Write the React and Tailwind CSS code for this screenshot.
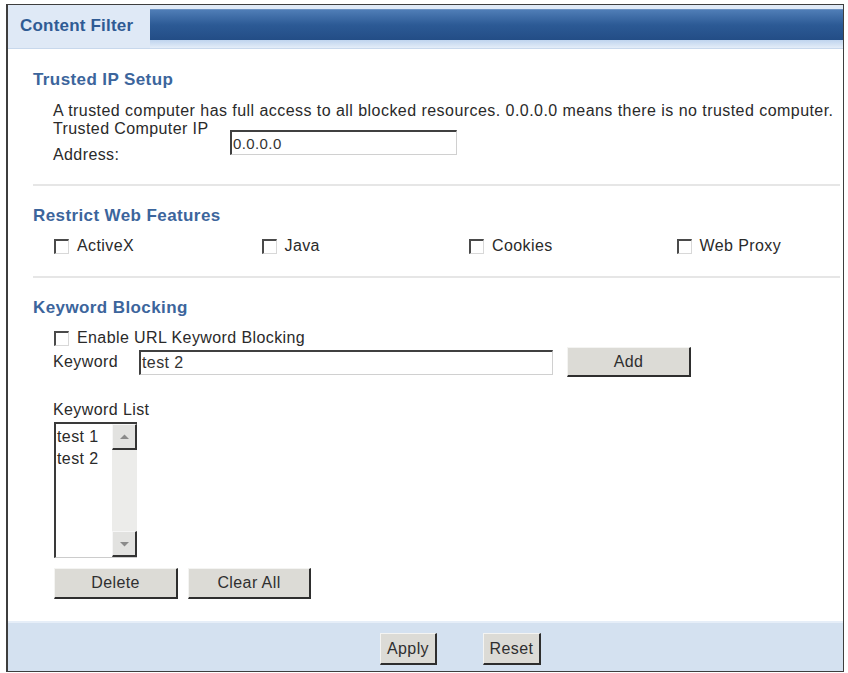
import { useState } from "react";

const FONT = { fontFamily: '"Liberation Sans", Arial, sans-serif' };

function Check({ label, checked, onChange }) {
  return (
    <label className="flex items-center cursor-pointer select-none">
      <span
        onClick={onChange}
        className="w-[15px] h-[15px] bg-white border-t-2 border-l-2 border-[#4a4a4a] border-r border-b border-r-[#d8d8d8] border-b-[#d8d8d8] flex items-center justify-center text-[10px] leading-none"
      >
        {checked ? "✓" : ""}
      </span>
      <span className="ml-[8px] text-[16px] text-[#2a2a2a]">{label}</span>
    </label>
  );
}

function Btn({ children, className = "" }) {
  return (
    <button
      className={`bg-[#dcdbd6] border-t border-l border-[#f4f4f2] border-r-2 border-b-2 border-r-[#2e2e2e] border-b-[#2e2e2e] text-[16px] text-[#2f2f2f] ${className}`}
    >
      {children}
    </button>
  );
}

function Heading({ children, className = "" }) {
  return (
    <div className={`h-[20px] flex items-center text-[17px] font-bold text-[#3c659c] tracking-[0.4px] ${className}`}>
      {children}
    </div>
  );
}

const Sep = ({ className = "" }) => (
  <div className={`ml-[25px] mr-[3px] border-t-2 border-[#e6e6e6] ${className}`} />
);

function Arrow({ up }) {
  return (
    <div className="h-[26px] bg-[#e2e2e0] border-t border-l border-[#f6f6f6] border-r-2 border-b-2 border-r-[#333] border-b-[#333] flex items-center justify-center">
      <svg width="9" height="6" viewBox="0 0 9 6">
        <path d={up ? "M0 5 L4.5 0.5 L9 5 Z" : "M0 1 L4.5 5.5 L9 1 Z"} fill="#8a8a8a" />
      </svg>
    </div>
  );
}

export default function App() {
  const [features, setFeatures] = useState({ ActiveX: false, Java: false, Cookies: false, "Web Proxy": false });
  const [enableKw, setEnableKw] = useState(false);
  const [ip, setIp] = useState("0.0.0.0");
  const [kw, setKw] = useState("test 2");
  const [list] = useState(["test 1", "test 2"]);

  return (
    <div className="w-[848px] h-[673px] bg-white pt-[4px] pl-[6px] overflow-hidden tracking-[0.4px]" style={FONT}>
      <div className="w-[838px] h-[668px] border border-l-2 border-[#3e3e3e] flex flex-col">
        {/* tab strip */}
        <div className="h-[44px] flex bg-[#dfe9f6] border-b border-[#c8d8ec]">
          <div className="w-[142px] flex items-center pl-[12px] pb-[2px] text-[17px] font-bold text-[#2f5b94] tracking-[0.2px]">
            Content Filter
          </div>
          <div className="flex-1 flex flex-col pt-[4px]">
            <div className="h-[31px] bg-gradient-to-b from-[#4f7db6] via-[#2c5a95] to-[#234d86] border-t border-[#6a90c0]" />
            <div className="flex-1 bg-gradient-to-b from-[#bfd4ee] to-[#e4edf8]" />
          </div>
        </div>

        <div className="flex-1 flex flex-col">
          {/* Trusted IP Setup */}
          <Heading className="mt-[21px] ml-[25px]">Trusted IP Setup</Heading>
          <div className="ml-[45px] mt-[13px] h-[16px] leading-[16px] text-[16px] text-[#2a2a2a] tracking-[0.45px] whitespace-nowrap">
            A trusted computer has full access to all blocked resources. 0.0.0.0 means there is no trusted computer.
          </div>
          <div className="ml-[45px] flex text-[16px] text-[#2a2a2a]">
            <div className="w-[177px]">
              <div className="leading-[16px] mt-[2px]">Trusted Computer IP</div>
              <div className="leading-[16px] mt-[10px]">Address:</div>
            </div>
            <input
              value={ip}
              onChange={(e) => setIp(e.target.value)}
              className="mt-[11px] w-[227px] h-[25px] px-[1px] text-[15px] text-[#333] bg-white border-t-2 border-l-2 border-[#404040] border-r border-b border-r-[#d0d0d0] border-b-[#d0d0d0] outline-none"
            />
          </div>

          <Sep className="mt-[21px]" />

          {/* Restrict Web Features */}
          <Heading className="mt-[20px] ml-[25px]">Restrict Web Features</Heading>
          <div className="mt-[10px] ml-[46px] h-[20px] flex items-center">
            {Object.keys(features).map((k) => (
              <div key={k} className="w-[207.5px] shrink-0">
                <Check
                  label={k}
                  checked={features[k]}
                  onChange={() => setFeatures((f) => ({ ...f, [k]: !f[k] }))}
                />
              </div>
            ))}
          </div>

          <Sep className="mt-[20px]" />

          {/* Keyword Blocking */}
          <Heading className="mt-[20px] ml-[25px]">Keyword Blocking</Heading>
          <div className="mt-[10px] ml-[46px] h-[20px] flex items-center">
            <Check label="Enable URL Keyword Blocking" checked={enableKw} onChange={() => setEnableKw((v) => !v)} />
          </div>
          <div className="mt-[-1px] ml-[45px] h-[30px] flex items-center text-[16px] text-[#2a2a2a]">
            <span className="w-[86px]">Keyword</span>
            <input
              value={kw}
              onChange={(e) => setKw(e.target.value)}
              className="w-[414px] h-[25px] px-[1px] text-[16px] text-[#333] bg-white border-t-2 border-l-2 border-[#404040] border-r border-b border-r-[#d0d0d0] border-b-[#d0d0d0] outline-none"
            />
            <Btn className="ml-[14px] w-[124px] h-[30px]">Add</Btn>
          </div>

          <div className="mt-[23px] ml-[45px] h-[20px] flex items-center text-[16px] text-[#2a2a2a]">Keyword List</div>
          <div className="mt-[2px] ml-[46px] w-[83px] h-[136px] flex bg-white border-t-2 border-l-2 border-[#3a3a3a] border-b border-b-[#ccc]">
            <div className="flex-1 pt-[2px] pl-[1px] text-[16px] leading-[22px] text-[#2a2a2a]">
              {list.map((item) => (
                <div key={item}>{item}</div>
              ))}
            </div>
            <div className="w-[25px] flex flex-col justify-between bg-[#ececea]">
              <Arrow up />
              <Arrow />
            </div>
          </div>
          <div className="mt-[10px] ml-[46px] flex gap-[10px]">
            <Btn className="w-[124px] h-[31px]">Delete</Btn>
            <Btn className="w-[123px] h-[31px]">Clear All</Btn>
          </div>

          {/* footer actions */}
          <div className="mt-auto h-[50px] bg-[#d4e1f0] border-t-2 border-[#e6eef8] flex items-start pt-[10px] pl-[372px]">
            <Btn className="w-[57px] h-[32px]">Apply</Btn>
            <Btn className="ml-[46px] w-[58px] h-[32px]">Reset</Btn>
          </div>
        </div>
      </div>
    </div>
  );
}
